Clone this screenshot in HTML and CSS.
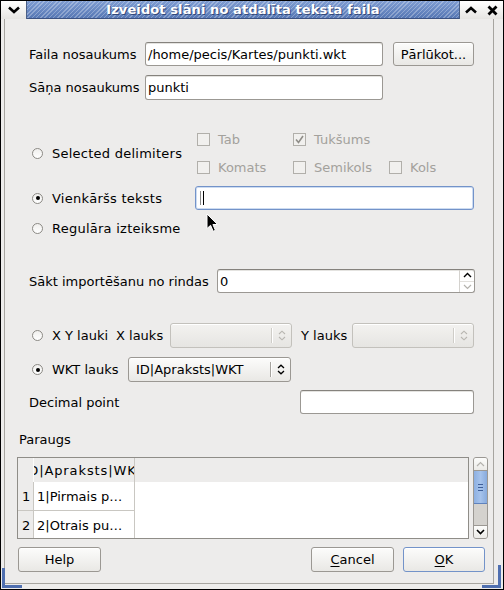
FILE: index.html
```html
<!DOCTYPE html>
<html lang="lv">
<head>
<meta charset="utf-8">
<title>Izveidot slāni no atdalīta teksta faila</title>
<link rel="stylesheet" href="styles.css">
</head>
<body>
<div class="window">
  <div class="titlebar">
    <div class="tb-btn tb-menu">
      <svg width="12" height="8" viewBox="0 0 12 8"><path d="M1 1.5 L6 6 L11 1.5" fill="none" stroke="#000" stroke-width="2.6"/></svg>
    </div>
    <div class="tb-title">Izveidot slāni no atdalīta teksta faila</div>
    <div class="tb-btn tb-max">
      <svg width="12" height="8" viewBox="0 0 12 8"><path d="M1 6.5 L6 2 L11 6.5" fill="none" stroke="#000" stroke-width="2.6"/></svg>
    </div>
    <div class="tb-btn tb-close">
      <svg width="11" height="11" viewBox="0 0 11 11"><path d="M1.5 1.5 L9.5 9.5 M9.5 1.5 L1.5 9.5" fill="none" stroke="#000" stroke-width="2.8"/></svg>
    </div>
  </div>

  <div class="client">
    <div class="form">
      <div class="row row-file">
        <label class="lbl lbl-name">Faila nosaukums</label>
        <div class="entry entry-file">/home/pecis/Kartes/punkti.wkt</div>
        <div class="btn btn-browse">Pārlūkot...</div>
      </div>

      <div class="row row-layer">
        <label class="lbl lbl-name">Sāņa nosaukums</label>
        <div class="entry entry-file">punkti</div>
      </div>

      <div class="delims">
        <div class="opt opt-sel"><span class="radio"></span><span>Selected delimiters</span></div>
        <div class="checks">
          <div class="chk"><span class="box"></span><span>Tab</span></div>
          <div class="chk"><span class="box on">
            <svg width="11" height="11" viewBox="0 0 11 11"><path d="M2 5.5 L4.5 8.5 L9 2" fill="none" stroke="#8f8d88" stroke-width="1.6"/></svg>
          </span><span>Tukšums</span></div>
          <div class="chk"></div>
          <div class="chk"><span class="box"></span><span>Komats</span></div>
          <div class="chk"><span class="box"></span><span>Semikols</span></div>
          <div class="chk"><span class="box"></span><span>Kols</span></div>
        </div>

        <div class="opt opt-plain"><span class="radio on"></span><span>Vienkāršs teksts</span></div>
        <div class="entry entry-focus"><span class="caret"></span><span class="caret caret-dark"></span></div>

        <div class="opt opt-regex"><span class="radio"></span><span>Regulāra izteiksme</span></div>
      </div>

      <div class="row row-start">
        <label class="lbl lbl-start">Sākt importēšanu no rindas</label>
        <div class="entry spin">
          <span class="spin-val">0</span>
          <span class="spin-arrows">
            <span class="spin-up"><svg width="9" height="6" viewBox="0 0 9 6"><path d="M1 5 L4.5 1.5 L8 5" fill="none" stroke="#000" stroke-width="1.4"/></svg></span>
            <span class="spin-down"><svg width="9" height="6" viewBox="0 0 9 6"><path d="M1 1 L4.5 4.5 L8 1" fill="none" stroke="#b4b2ad" stroke-width="1.2"/></svg></span>
          </span>
        </div>
      </div>

      <div class="row row-xy">
        <span class="radio"></span>
        <span class="txt-xy">X Y lauki</span>
        <span class="txt-x">X lauks</span>
        <div class="combo combo-off combo-x">
          <span class="combo-val"></span>
          <span class="combo-sep"></span>
          <span class="combo-arr"><svg width="8" height="11" viewBox="0 0 8 11"><path d="M1 4 L4 1.2 L7 4 M1 7 L4 9.8 L7 7" fill="none" stroke="#b8b6b1" stroke-width="1.1"/></svg></span>
        </div>
        <span class="txt-y">Y lauks</span>
        <div class="combo combo-off combo-y">
          <span class="combo-val"></span>
          <span class="combo-sep"></span>
          <span class="combo-arr"><svg width="8" height="11" viewBox="0 0 8 11"><path d="M1 4 L4 1.2 L7 4 M1 7 L4 9.8 L7 7" fill="none" stroke="#b8b6b1" stroke-width="1.1"/></svg></span>
        </div>
      </div>

      <div class="row row-wkt">
        <span class="radio on"></span>
        <span class="txt-wkt">WKT lauks</span>
        <div class="combo combo-wkt">
          <span class="combo-val">ID|Apraksts|WKT</span>
          <span class="combo-sep"></span>
          <span class="combo-arr"><svg width="8" height="11" viewBox="0 0 8 11"><path d="M1 4 L4 1.2 L7 4 M1 7 L4 9.8 L7 7" fill="none" stroke="#000" stroke-width="1.3"/></svg></span>
        </div>
      </div>

      <div class="row row-dec">
        <label class="lbl lbl-dec">Decimal point</label>
        <div class="entry entry-dec"></div>
      </div>
    </div>

    <div class="sample-lbl">Paraugs</div>

    <div class="preview">
      <div class="table">
        <div class="thead">
          <div class="corner"></div>
          <div class="colhead"><span>ID|Apraksts|WKT</span></div>
          <div class="thead-rest"></div>
        </div>
        <div class="trow">
          <div class="rowhead">1</div>
          <div class="cell">1|Pirmais p…</div>
        </div>
        <div class="trow">
          <div class="rowhead">2</div>
          <div class="cell">2|Otrais pu…</div>
        </div>
      </div>
      <div class="vscroll">
        <div class="sb-btn sb-up"><svg width="9" height="6" viewBox="0 0 9 6"><path d="M1 5 L4.5 1.5 L8 5" fill="none" stroke="#b4b2ad" stroke-width="1.2"/></svg></div>
        <div class="sb-thumb"><span></span><span></span><span></span></div>
        <div class="sb-trough"></div>
        <div class="sb-btn sb-down"><svg width="9" height="6" viewBox="0 0 9 6"><path d="M1 1 L4.5 4.5 L8 1" fill="none" stroke="#000" stroke-width="1.6"/></svg></div>
      </div>
    </div>

    <div class="buttons">
      <div class="btn btn-help">Help</div>
      <div class="spacer"></div>
      <div class="btn btn-cancel"><span><u>C</u>ancel</span></div>
      <div class="btn btn-ok"><span><u>O</u>K</span></div>
    </div>
  </div>

  <!-- resize grips in the frame corners -->
  <span class="grip grip-l"></span>
  <span class="grip grip-r"></span>

  <!-- mouse pointer -->
  <svg class="pointer" width="13" height="20" viewBox="0 0 13 20">
    <path d="M1 1 L1 15.5 L4.6 12.3 L7.2 18.3 L9.4 17.3 L6.9 11.5 L11.6 11.5 Z" fill="#000" stroke="#fff" stroke-width="1" stroke-linejoin="round"/>
  </svg>
</div>
</body>
</html>
```

FILE: styles.css
```css
* { box-sizing: border-box; }

html, body {
  margin: 0;
  padding: 0;
}

body {
  width: 504px;
  height: 590px;
  overflow: hidden;
  font-family: "DejaVu Sans", "Noto Sans", sans-serif;
  font-size: 13px;
  color: #000;
  background: #edeceb;
}

/* ---------- window frame ---------- */
.window {
  position: relative;
  width: 504px;
  height: 590px;
  border: 1px solid #000;
  background: #edeceb;
  display: flex;
  flex-direction: column;
}

.titlebar {
  height: 18px;
  display: flex;
  flex: none;
}

.tb-btn {
  height: 18px;
  display: flex;
  align-items: center;
  justify-content: center;
  background: linear-gradient(#ffffff, #e6e5e2);
}

.tb-menu { width: 26px; border-right: 1px solid #4a5f86; }
.tb-max { width: 22px; border-left: 1px solid #4a5f86; }
.tb-close { width: 22px; }

.tb-title {
  flex: 1;
  color: #fff;
  font-weight: bold;
  font-size: 13px;
  line-height: 18px;
  text-align: center;
  letter-spacing: 0.1px;
  text-shadow: 1px 1px 0 #33497a;
  background:
    repeating-linear-gradient(135deg, rgba(255,255,255,0.28) 0 1px, rgba(255,255,255,0) 1px 3px),
    linear-gradient(#7f9dd2, #5677b4);
  border-bottom: 1px solid #3c5282;
}

.client {
  flex: 1;
  margin: 0 9px 5px 3px;
  border-left: 1px solid #a7a5a0;
  border-right: 1px solid #a7a5a0;
  border-bottom: 1px solid #a7a5a0;
  display: flex;
  flex-direction: column;
  padding-top: 23px;
}

.grip-l, .grip-r {
  position: absolute;
  bottom: 1px;
  background: transparent;
}
.grip-l {
  left: 1px;
  width: 20px;
  height: 20px;
  border-left: 3px solid #4f6fb0;
  border-bottom: 3px solid #4f6fb0;
}
.grip-r {
  right: 2px;
  width: 19px;
  height: 23px;
  border-right: 3px solid #4f6fb0;
  border-bottom: 3px solid #4f6fb0;
}

.pointer {
  position: absolute;
  left: 205px;
  top: 212px;
}

/* ---------- form ---------- */
.form {
  padding-left: 24px;
  display: flex;
  flex-direction: column;
}

.row {
  display: flex;
  align-items: center;
}

.lbl { flex: none; white-space: nowrap; }
.lbl-name { width: 116px; }
.lbl-start { width: 188px; }
.lbl-dec { width: 271px; }

.row-file { height: 24px; }
.row-layer { height: 25px; margin-top: 9px; }

.entry {
  height: 24px;
  border: 1px solid #9b9893;
  border-top-color: #85827d;
  border-radius: 3px;
  background: #fff;
  display: flex;
  align-items: center;
  padding: 0 2px;
  white-space: nowrap;
  overflow: hidden;
  box-shadow: inset 0 1px 0 #e4e3e0;
}
.row-layer .entry { height: 25px; }

.entry-file { width: 238px; }

.btn {
  height: 25px;
  border: 1px solid #9b9893;
  border-radius: 3px;
  background: linear-gradient(#fcfcfb, #e9e8e5);
  display: flex;
  align-items: center;
  justify-content: center;
  white-space: nowrap;
  box-shadow: inset 0 1px 0 #fff;
}
.btn u { text-decoration: underline; text-underline-offset: 2px; }

.btn-browse {
  width: 81px;
  margin-left: 10px;
  height: 24px;
}

/* delimiter options */
.delims {
  margin-top: 25px;
  display: grid;
  grid-template-columns: 166px 279px;
  grid-template-rows: 56px 29px 28px;
}

.opt {
  display: flex;
  align-items: center;
  padding-left: 3px;
  white-space: nowrap;
  letter-spacing: 0.25px;
}
.opt .radio { margin-right: 9px; }
.opt-plain { margin-top: 5px; }
.entry-focus { margin-top: 5px; }
.opt-regex { margin-top: 8px; }

.radio {
  width: 11px;
  height: 11px;
  flex: none;
  border-radius: 50%;
  border: 1px solid #8c8a85;
  background: linear-gradient(#f0efed, #ffffff);
  position: relative;
}
.radio.on::after {
  content: "";
  position: absolute;
  left: 2.5px;
  top: 2.5px;
  width: 4px;
  height: 4px;
  border-radius: 50%;
  background: #000;
}

.checks {
  display: grid;
  grid-template-columns: 96px 96px 87px;
  grid-template-rows: 28px 28px;
  color: #a3a19c;
}

.chk {
  display: flex;
  align-items: center;
  padding-left: 2px;
  white-space: nowrap;
}

.box {
  width: 13px;
  height: 13px;
  flex: none;
  border: 1px solid #b1afaa;
  background: #f1f0ee;
  margin-right: 8px;
  display: flex;
  align-items: center;
  justify-content: center;
}

.entry-focus {
  width: 279px;
  border-color: #7393c9;
  box-shadow: inset 0 0 0 1px #cddcf1;
  padding-left: 4px;
}

.caret {
  width: 1px;
  height: 14px;
  background: #8a8a8a;
  margin-right: 2px;
}
.caret-dark { background: #000; }

/* start row */
.row-start { height: 24px; margin-top: 31px; }
.spin {
  width: 258px;
  padding-right: 0;
}
.spin-val { flex: 1; }
.spin-arrows {
  width: 15px;
  height: 100%;
  border-left: 1px solid #d4d2ce;
  display: flex;
  flex-direction: column;
}
.spin-arrows span {
  flex: 1;
  display: flex;
  align-items: center;
  justify-content: center;
}
.spin-up { border-bottom: 1px solid #e2e0dc; }

/* field choice rows */
.row-xy, .row-wkt { padding-left: 3px; white-space: nowrap; }
.row-xy { height: 25px; margin-top: 30px; }
.row-wkt { height: 25px; margin-top: 9px; }

.txt-xy { margin-left: 9px; width: 64px; }
.txt-x { width: 54px; }
.txt-y { margin-left: 9px; width: 51px; }
.txt-wkt { margin-left: 9px; width: 76px; }

.combo {
  height: 25px;
  border: 1px solid #9b9893;
  border-radius: 3px;
  background: linear-gradient(#fcfcfb, #e9e8e5);
  display: flex;
  align-items: center;
  box-shadow: inset 0 1px 0 #fff;
}
.combo-val { flex: 1; padding-left: 7px; overflow: hidden; }
.combo-sep {
  width: 1px;
  height: 15px;
  background: #a6a49f;
  box-shadow: 1px 0 0 #fff;
}
.combo-arr {
  width: 19px;
  display: flex;
  justify-content: center;
  align-items: center;
}
.combo-off {
  border-color: #c3c1bc;
  background: linear-gradient(#f3f2f0, #e6e5e2);
}
.combo-off .combo-sep { background: #cfcdc8; }
.combo-x { width: 122px; }
.combo-y { width: 122px; }
.combo-wkt { width: 163px; }

.row-dec { height: 24px; margin-top: 8px; }
.entry-dec { width: 174px; }

/* ---------- preview ---------- */
.sample-lbl {
  margin-top: 18px;
  height: 16px;
  line-height: 16px;
  padding-left: 14px;
}

.preview {
  margin-top: 9px;
  margin-left: 12px;
  height: 82px;
  display: flex;
}

.table {
  width: 452px;
  height: 82px;
  border: 1px solid #8f8d88;
  background: #fff;
  overflow: hidden;
}

.thead {
  height: 24px;
  display: flex;
  background: #edeceb;
}
.corner { width: 16px; border-right: 1px solid #fbfbfa; }
.colhead {
  width: 101px;
  border-right: 1px solid #c9c7c2;
  display: flex;
  justify-content: center;
  align-items: center;
  overflow: hidden;
  white-space: nowrap;
}
.colhead span { flex: none; letter-spacing: 0.9px; }
.thead-rest { flex: 1; }

.trow {
  display: flex;
  height: 29px;
}
.rowhead {
  width: 16px;
  background: #edeceb;
  border-right: 1px solid #c9c7c2;
  border-bottom: 1px solid #c9c7c2;
  display: flex;
  align-items: center;
  padding-left: 4px;
}
.cell {
  width: 101px;
  border-right: 1px solid #c9c7c2;
  border-bottom: 1px solid #c9c7c2;
  display: flex;
  align-items: center;
  padding-left: 3px;
  white-space: nowrap;
  overflow: hidden;
}

.vscroll {
  width: 15px;
  height: 82px;
  margin-left: 4px;
  border: 1px solid #9b9893;
  border-radius: 3px;
  background: #d4d2ce;
  display: flex;
  flex-direction: column;
  overflow: hidden;
}
.sb-btn {
  height: 13px;
  flex: none;
  background: linear-gradient(#fcfcfb, #ebeae7);
  display: flex;
  align-items: center;
  justify-content: center;
}
.sb-up { border-bottom: 1px solid #9b9893; }
.sb-down { border-top: 1px solid #9b9893; }
.sb-thumb {
  height: 33px;
  flex: none;
  background: linear-gradient(90deg, #8db0e2, #a6c3ec 50%, #88abdd);
  border-bottom: 1px solid #5f82bd;
  display: flex;
  flex-direction: column;
  align-items: center;
  justify-content: center;
  gap: 2px;
}
.sb-thumb span {
  width: 5px;
  height: 1px;
  background: #3e5f99;
}
.sb-trough { flex: 1; }

/* ---------- dialog buttons ---------- */
.buttons {
  margin-top: 8px;
  padding-left: 13px;
  display: flex;
  height: 25px;
}
.spacer { flex: 1; }
.btn-help { width: 83px; }
.btn-cancel { width: 83px; }
.btn-ok {
  width: 82px;
  margin-left: 9px;
  margin-right: 8px;
  border-color: #7393c9;
}
```
